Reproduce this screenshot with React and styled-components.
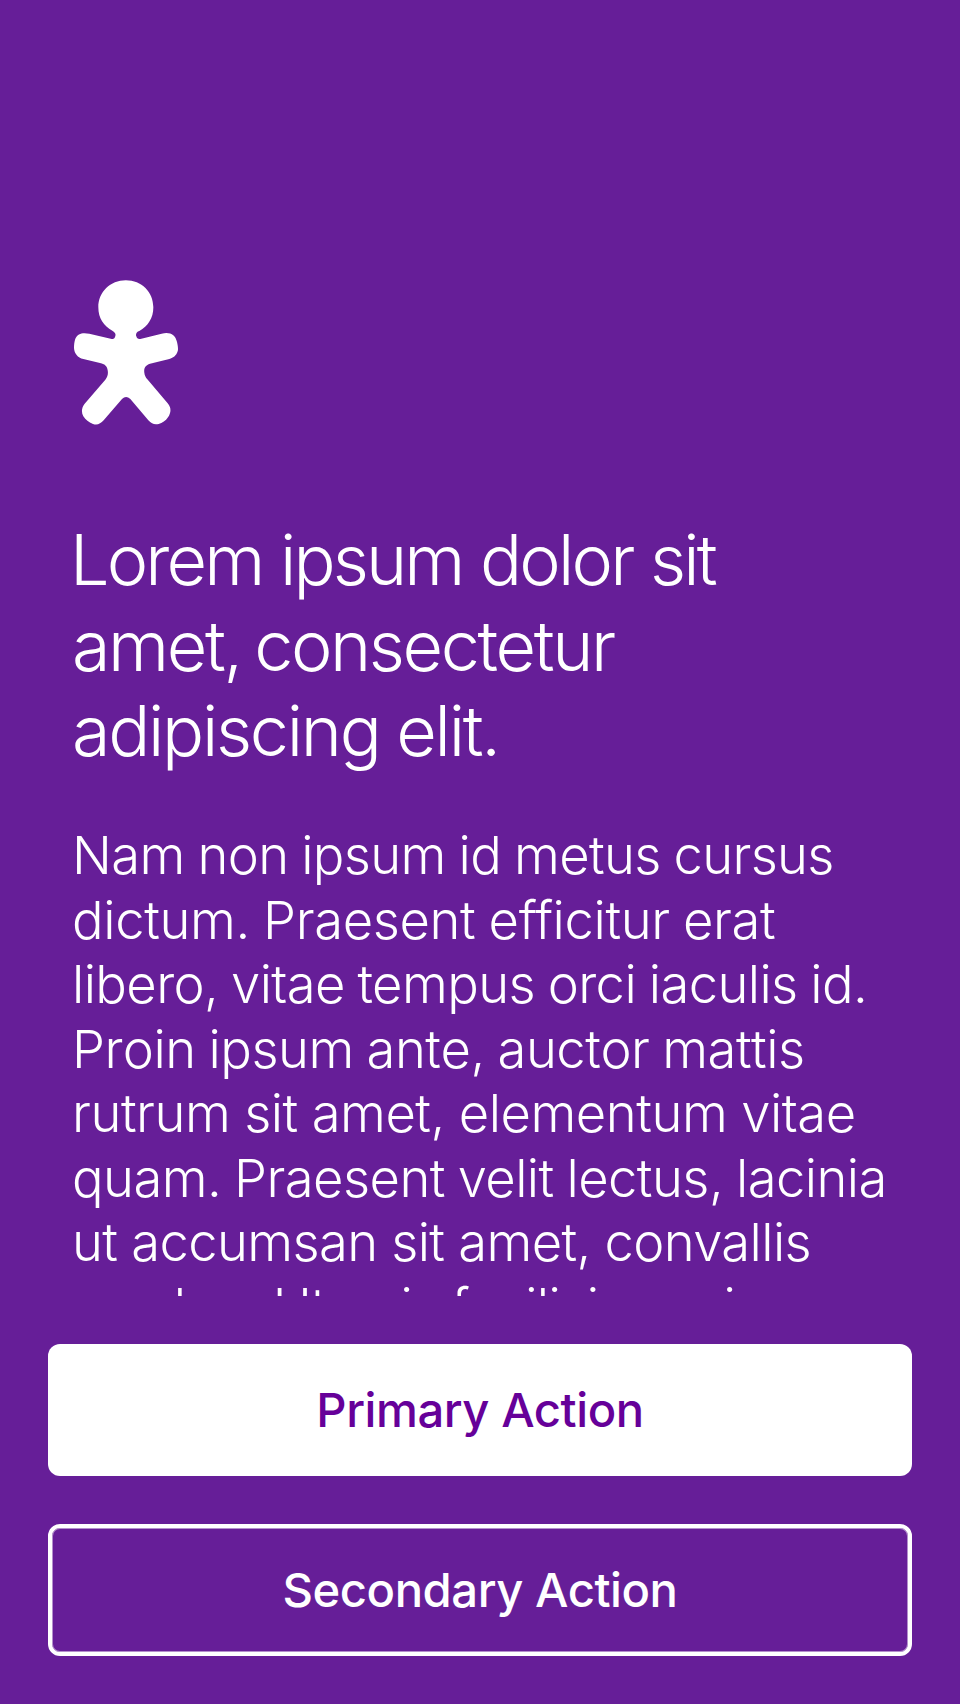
import React from "react";
import styled, { createGlobalStyle } from "styled-components";

const GlobalStyle = createGlobalStyle`
  * {
    box-sizing: border-box;
  }
  body {
    margin: 0;
    background: #661e98;
  }
`;

const Screen = styled.main`
  display: flex;
  flex-direction: column;
  width: 100%;
  height: 1704px;
  overflow: hidden;
  background: #661e98;
  color: #ffffff;
  font-family: Inter, "Liberation Sans", sans-serif;
  font-variant-ligatures: none;
`;

const Content = styled.section`
  height: 1296px;
  padding: 280px 0 0 72px;
  overflow: hidden;
`;

const Figure = styled.svg`
  display: block;
  width: 106px;
  height: 145px;
  margin-left: 1px;
`;

const Line = styled.span`
  display: block;
  white-space: nowrap;
  margin-left: ${({ $indent = 0 }) => $indent}px;
  letter-spacing: ${({ $tracking }) => $tracking}px;
  word-spacing: ${({ $gap }) => $gap}px;
  font-kerning: ${({ $kerning = "auto" }) => $kerning};
`;

const Title = styled.h1`
  margin: 92px 0 0;
  font-size: 70px;
  font-weight: 300;
  line-height: 85.6px;
`;

const Body = styled.p`
  margin: 49.6px 0 0;
  font-size: 52.5px;
  font-weight: 300;
  line-height: 64.5px;
`;

const Actions = styled.footer`
  display: flex;
  flex-direction: column;
  gap: 48px;
  padding: 48px;
`;

const Button = styled.button`
  display: flex;
  align-items: center;
  justify-content: center;
  height: 132px;
  padding: 0;
  border: ${({ $outlined }) => ($outlined ? "4px solid #ffffff" : "0")};
  border-radius: 12px;
  box-shadow: ${({ $outlined }) =>
    $outlined ? "inset 0 0 0 1px rgba(255, 255, 255, 0.5)" : "none"};
  background: ${({ $outlined }) => ($outlined ? "transparent" : "#ffffff")};
  color: ${({ $outlined }) => ($outlined ? "#ffffff" : "#660099")};
  font-family: inherit;
  font-size: 47.2px;
  font-weight: 500;
  line-height: 58px;
  letter-spacing: -0.45px;
`;

const title = [
  { text: "Lorem ipsum dolor sit", tracking: -2.84, gap: 0.6, indent: -2 },
  { text: "amet, consectetur", tracking: -2.38, gap: -4 },
  { text: "adipiscing elit.", tracking: -2.28, gap: -0.7 },
];

const body = [
  { text: "Nam non ipsum id metus cursus", tracking: -0.66, gap: -1.2 },
  { text: "dictum. Praesent efficitur erat", tracking: -0.36, gap: -1.2 },
  { text: "libero, vitae tempus orci iaculis id.", tracking: -0.59, gap: -1.5 },
  { text: "Proin ipsum ante, auctor mattis", tracking: -0.48, gap: -1.5, kerning: "none" },
  { text: "rutrum sit amet, elementum vitae", tracking: -0.45, gap: -0.5 },
  { text: "quam. Praesent velit lectus, lacinia", tracking: -0.55, gap: -1.4 },
  { text: "ut accumsan sit amet, convallis", tracking: -0.6, gap: -0.4 },
  { text: "nec leo. Ut quis facilisis sapien", tracking: -0.6, gap: -1.2 },
];

const Lines = ({ lines }) =>
  lines.map(({ text, tracking, gap, indent, kerning }) => (
    <Line
      key={text}
      $tracking={tracking}
      $gap={gap}
      $indent={indent}
      $kerning={kerning}
    >
      {text}{" "}
    </Line>
  ));

export default function App() {
  return (
    <>
      <GlobalStyle />
      <Screen>
        <Content>
          <Figure viewBox="39 30 318 435" fill="#ffffff" aria-hidden="true">
            <path d="M197.5 31C245 31 280 66 280 112C280 145 264 168 238 183C230 185 226 193 229 199C231 206 235 208 244 206L305 191C330 185 346 194 351 216C354 229 355 239 353 244C349 257 340 264 325 268L270 281C256 285 251 295 253 308C254 316 257 322 262 328L323 400C335 414 333 428 324 442C317 453 307 459 296 462C284 465 275 462 265 451L211 387Q198 375 186 387L131 451C121 462 112 466 99 462C86 457 77 450 70 439C63 425 65 413 74 401L136 329C143 320 145 312 143 301C141 289 135 283 123 280L70 267C53 263 43 251 42 234C42 224 43 215 46 206C53 190 68 187 88 191L152 206C161 208 164 206 166 198C168 191 165 187 157 182C131 168 115 145 115 112C115 66 151 31 197.5 31Z" />
          </Figure>
          <Title>
            <Lines lines={title} />
          </Title>
          <Body>
            <Lines lines={body} />
          </Body>
        </Content>
        <Actions>
          <Button type="button">Primary Action</Button>
          <Button type="button" $outlined>
            Secondary Action
          </Button>
        </Actions>
      </Screen>
    </>
  );
}
